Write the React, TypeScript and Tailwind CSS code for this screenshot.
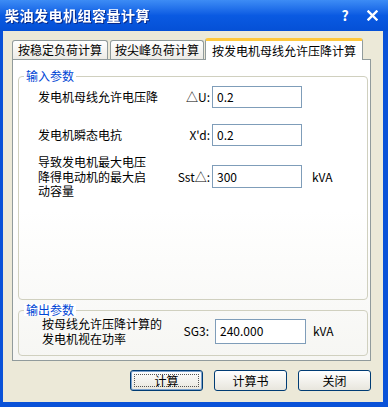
import React from "react";

const font = { fontFamily: '"Noto Sans CJK SC", "Noto Sans", sans-serif' } as const;

function Input({ value, w = "w-[90px]", h = "h-[22px]" }: { value: string; w?: string; h?: string }) {
  return (
    <div className={`${w} ${h} border border-[#7f9db9] bg-white flex items-center pl-[4px] text-[12px] text-black`}>
      {value}
    </div>
  );
}

function Btn({ label, focused }: { label: string; focused?: boolean }) {
  return (
    <div
      className={`w-[73px] h-[21px] rounded-[3px] border ${
        focused ? "border-[#003c74] shadow-[inset_0_0_0_1px_#7da2ce]" : "border-[#003c74]"
      } bg-gradient-to-b from-[#ffffff] to-[#e8e6dd] flex items-center justify-center text-[12px] text-black relative`}
    >
      {focused && <div className="absolute inset-[3px] border border-dotted border-[#555]" />}
      <span className="relative">{label}</span>
    </div>
  );
}

function Lines({ lines, w, lh }: { lines: string[]; w: string; lh: string }) {
  return (
    <div className={`${w} flex flex-col`}>
      {lines.map((l) => (
        <div key={l} className={`${lh} flex items-center whitespace-nowrap`}>
          {l}
        </div>
      ))}
    </div>
  );
}

export default function App() {
  return (
    <div className="w-[388px] h-[407px] bg-[#0a52d8] flex flex-col overflow-hidden" style={font}>
      {/* Title bar */}
      <div className="h-[31px] shrink-0 bg-gradient-to-b from-[#3d8cf5] via-[#0a5ae2] to-[#0550d6] flex items-center pl-[5px] pr-[10px]">
        <span className="text-white font-bold text-[14px] tracking-[0.5px] drop-shadow-[1px_1px_0_#0a2a8a]">
          柴油发电机组容量计算
        </span>
        <div className="ml-auto flex items-center gap-[17px] text-white font-bold text-[14px]">
          <span className="w-[10px] text-center">?</span>
          <svg width="11" height="11" viewBox="0 0 11 11">
            <path d="M1.5 1.5 L9.5 9.5 M9.5 1.5 L1.5 9.5" stroke="white" strokeWidth="2.4" strokeLinecap="square" />
          </svg>
        </div>
      </div>

      {/* Body */}
      <div className="ml-[3px] mr-[5px] mb-[5px] flex-1 bg-[#ece9d8] flex flex-col pl-[9px] pr-[12px] pt-[7px]">
        {/* Tabs */}
        <div className="h-[22px] flex items-end text-[12px] text-black relative z-10">
          <div className="w-[96px] h-[19px] border border-b-0 border-[#919b9c] rounded-t-[3px] bg-gradient-to-b from-white to-[#ecebe6] flex items-center justify-center mb-[1px]">
            按稳定负荷计算
          </div>
          <div className="ml-[2px] w-[94px] h-[19px] border border-b-0 border-[#919b9c] rounded-t-[3px] bg-gradient-to-b from-white to-[#ecebe6] flex items-center justify-center mb-[1px]">
            按尖峰负荷计算
          </div>
          <div className="ml-[1px] w-[158px] h-[22px] border border-b-0 border-[#919b9c] border-t-[3px] border-t-[#ffc83c] rounded-t-[3px] bg-white flex items-center justify-center">
            按发电机母线允许压降计算
          </div>
        </div>

        {/* Panel */}
        <div className="h-[302px] -mt-[1px] border border-[#919b9c] bg-gradient-to-b from-white via-white to-[#f6f6f3] pl-[5px] pr-[2px] pt-[10px] flex flex-col">
          {/* Group 1 */}
          <div className="relative h-[224px] mt-[6px] border border-[#d0d0bf] rounded-[4px]">
            <span className="absolute -top-[7px] left-[5px] bg-white px-[2px] text-[12px] leading-[12px] text-[#0046d5]">
              输入参数
            </span>
            <div className="pl-[19px] pt-[9px] text-[12px] text-black">
              <div className="flex items-center h-[22px]">
                <span className="w-[132px]">发电机母线允许电压降</span>
                <span className="w-[41px] text-right pr-[1px]">△U:</span>
                <div className="ml-[1px]">
                  <Input value="0.2" />
                </div>
              </div>
              <div className="flex items-center h-[22px] mt-[16px]">
                <span className="w-[132px]">发电机瞬态电抗</span>
                <span className="w-[41px] text-right pr-[1px]">X&apos;d:</span>
                <div className="ml-[1px]">
                  <Input value="0.2" />
                </div>
              </div>
              <div className="flex items-center mt-[9px]">
                <Lines
                  w="w-[132px]"
                  lh="h-[14.5px] leading-[14.5px]"
                  lines={["导致发电机最大电压", "降得电动机的最大启", "动容量"]}
                />
                <span className="w-[41px] text-right pr-[1px]">Sst△:</span>
                <div className="ml-[1px]">
                  <Input value="300" h="h-[23px]" />
                </div>
                <span className="ml-[10px]">kVA</span>
              </div>
            </div>
          </div>

          {/* Group 2 */}
          <div className="relative h-[46px] mt-[10px] border border-[#d0d0bf] rounded-[4px]">
            <span className="absolute -top-[7px] left-[5px] bg-white px-[2px] text-[12px] leading-[12px] text-[#0046d5]">
              输出参数
            </span>
            <div className="pl-[23px] pt-[5px] flex items-center text-[12px] text-black">
              <Lines
                w="w-[129px]"
                lh="h-[15px] leading-[15px]"
                lines={["按母线允许压降计算的", "发电机视在功率"]}
              />
              <span className="w-[38px] text-right">SG3:</span>
              <div className="ml-[6px]">
                <Input value="240.000" w="w-[91px]" h="h-[25px]" />
              </div>
              <span className="ml-[7px]">kVA</span>
            </div>
          </div>
        </div>

        {/* Buttons */}
        <div className="flex justify-end gap-[11px] mt-[9px]">
          <Btn label="计算" focused />
          <Btn label="计算书" />
          <Btn label="关闭" />
        </div>
      </div>
    </div>
  );
}
